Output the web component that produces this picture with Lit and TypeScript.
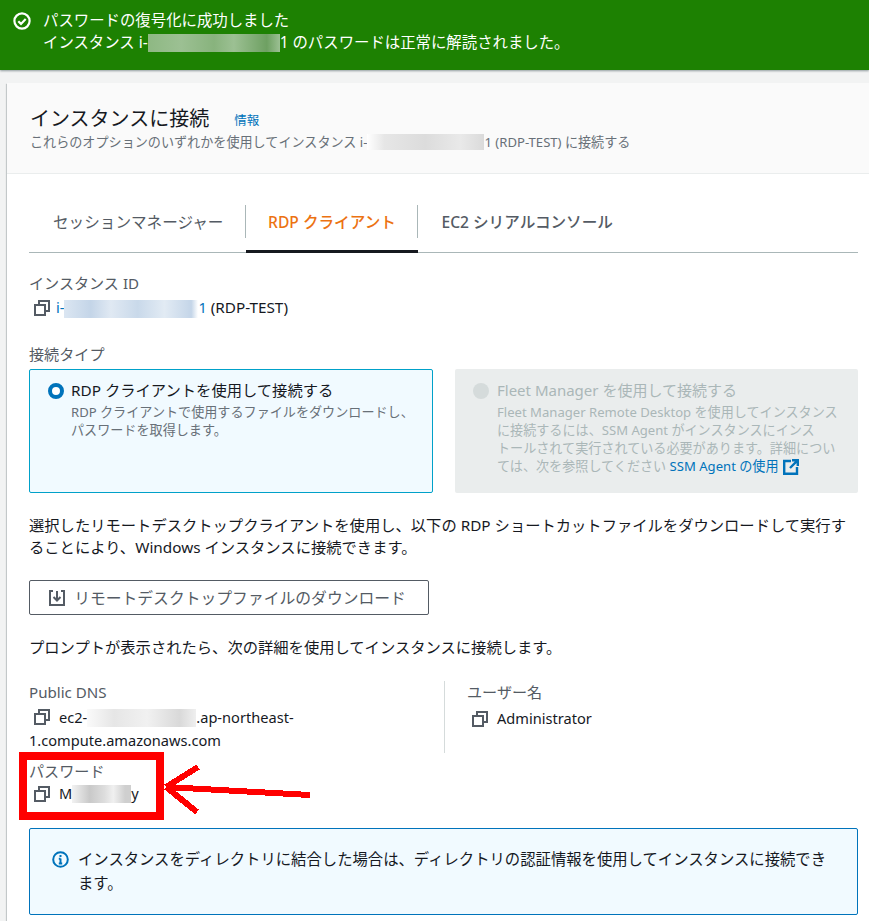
import { LitElement, html, css, svg } from "lit";
import { customElement } from "lit/decorators.js";

const copyIcon = svg`<svg class="copy" width="16" height="16" viewBox="0 0 16 16" fill="none" stroke="#545b64" stroke-width="2"><rect x="1" y="5" width="10" height="10"/><path d="M5 4V1h10v10h-3"/></svg>`;

@customElement("app-root")
export class AppRoot extends LitElement {
  static styles = css`
    :host { display: block; width: 869px; height: 921px; overflow: hidden; position: relative; background: #f2f3f3; font-family: "Noto Sans", "Noto Sans CJK JP", sans-serif; font-size: 14px; color: #16191f; }
    .banner { height: 70px; background: #1d8102; color: #fff; box-shadow: 0 1px 2px rgba(0,28,36,.4); display: flex; gap: 12px; padding: 10px 0 0 13px; box-sizing: border-box; line-height: 22px; }
    .banner svg { margin-top: 2px; flex: none; }
    .banner p { margin: 0; white-space: nowrap; }
    .t1 { font-size: 15.4px; }
    .card { margin: 13px 0 0 7px; background: #fff; box-shadow: 0 1px 1px 0 rgba(0,28,36,.3), 1px 1px 1px 0 rgba(0,28,36,.15), -1px 1px 1px 0 rgba(0,28,36,.15); height: 900px; }
    .head { height: 91px; background: #fafafa; border-bottom: 1px solid #eaeded; box-sizing: border-box; padding: 22px 23px 0; }
    .title { display: flex; align-items: center; gap: 25px; height: 28px; }
    .title h1 { margin: 0; font-size: 20px; font-weight: 400; line-height: 28px; }
    .title a { font-size: 12.5px; color: #0073bb; }
    .sub { font-size: 13.1px; color: #687078; line-height: 20px; margin-top: -1px; white-space: nowrap; }
    .body { padding: 0 11px 0 22px; }
    .tabs { display: flex; height: 78px; border-bottom: 1px solid #aab7b8; align-items: flex-end; }
    .tab { height: 47px; box-sizing: border-box; display: flex; align-items: flex-start; font-size: 15.6px; font-weight: 400; color: #545b64; white-space: nowrap; position: relative; }
    .tab span { height: 33px; display: flex; align-items: center; padding: 0 22px; border-right: 1px solid #aab7b8; }
    .tab:last-child span { border-right: 0; padding-left: 23px; }
    .tab.first span { padding-left: 24px; }
    .tab.active { color: #ec7211; font-weight: 500; width: 172px; border-bottom: 3px solid #16191f; margin-bottom: -1px; height: 48px; }
    .tab.active span { width: 100%; box-sizing: border-box; justify-content: center; padding: 0; }
    .tab.last { font-weight: 500; }
    .label { color: #545b64; line-height: 22px; font-size: 15.1px; white-space: nowrap; }
    .value { display: flex; align-items: center; line-height: 23px; font-size: 14.6px; white-space: nowrap; margin-top: 2px; }
    .copy { margin: 0 9px 0 5px; flex: none; }
    .tight .copy { margin-right: 6px; }
    .tag { font-size: 15.3px; }
    .blur { display: inline-block; height: 16px; vertical-align: middle; }
    .b-blue { width: 134px; height: 18px; background: linear-gradient(90deg,#dbe6f2,#c4d5e8 20%,#e0e9f3 35%,#c9d9ea 55%,#e2ebf4 75%,#c4d5e8 95%,#fff); }
    .b-green { width: 132px; height: 18px; background: linear-gradient(90deg,#8eb883,#9cc093 25%,#88b37d 50%,#9cc093 65%,#6ea062 90%,#9cc093); vertical-align: -4px; }
    .b-grey { width: 117px; height: 16px; background: linear-gradient(90deg,#fff,#e6e6e6 15%,#dcdcdc 50%,#e9e9e9 80%,#dadada); vertical-align: -3px; }
    .b-dns { width: 109px; height: 18px; background: linear-gradient(90deg,#fafafa,#e6e6e6 25%,#f1f1f1 55%,#d9d9d9 85%,#efefef); vertical-align: -4px; }
    .b-pw { width: 59px; height: 18px; background: linear-gradient(90deg,#f2f2f2,#c9c9c9 30%,#dddddd 55%,#f0f0f0 70%,#cfcfcf 90%); vertical-align: -4px; }
    .link { color: #0073bb; }
    .f1 { margin-top: 19px; }
    .f2 { margin-top: 24px; }
    .radios { display: grid; grid-template-columns: 404px 403px; gap: 22px; margin-top: 4px; height: 124px; }
    .radio { border-radius: 2px; box-sizing: border-box; display: flex; gap: 7px; }
    .radio.on { background: #f1faff; border: 1px solid #00a1c9; padding: 10px 18px 0; }
    .radio.off { background: #eaeded; padding: 11px 19px 0 18px; color: #aab7b8; gap: 8px; }
    .dot { width: 16px; height: 16px; border-radius: 50%; flex: none; margin-top: 3px; box-sizing: border-box; }
    .on .dot { border: 4.5px solid #0073bb; background: #fff; }
    .off .dot { background: #d5dbdb; }
    .rt { font-size: 15.3px; line-height: 20px; white-space: nowrap; }
    .off .rt { font-size: 15px; }
    .rd { font-size: 13.1px; line-height: 18px; color: #687078; margin-top: 3px; white-space: nowrap; }
    .off .rd { color: #aab7b8; }
    .rd .link svg { vertical-align: -4px; margin-left: 4px; }
    .para { margin: 21px 0 0; line-height: 22px; font-size: 15.3px; white-space: nowrap; }
    .btn { display: flex; align-items: center; justify-content: center; gap: 9px; width: 400px; height: 35px; box-sizing: border-box; margin-top: 22px; padding-right: 3px; border: 1px solid #545b64; border-radius: 2px; background: #fff; color: #545b64; font-size: 15.8px; font-weight: 400; white-space: nowrap; }
    .p2 { margin-top: 21px; }
    .cols { display: grid; grid-template-columns: 415px 1fr; margin-top: 23px; height: 72px; }
    .col2 { border-left: 1px solid #d5dbdb; padding-left: 22px; height: 72px; }
    .col2 .value { margin-top: 4px; }
    .wrap { line-height: 23px; font-size: 14.6px; margin-top: 3px; white-space: nowrap; }
    .wrap .copy { vertical-align: -2px; }
    .pw { margin-top: 7px; }
    .pw .value { margin-top: 0; }
    .info { margin-top: 23px; height: 87px; border: 1px solid #0073bb; border-radius: 2px; background: #f1faff; box-sizing: border-box; padding: 18px 22px 0; display: flex; gap: 9px; font-size: 15.35px; line-height: 24px; }
    .info svg { flex: none; margin-top: 4px; }
    .annot { position: absolute; left: 0; top: 0; pointer-events: none; }
  `;

  render() {
    return html`
      <div class="banner">
        <svg width="18" height="18" viewBox="0 0 18 18" fill="none" stroke="#fff" stroke-width="2.2"><circle cx="9" cy="9" r="7.6"/><path d="M5.3 9.2l2.7 2.7 4.7-4.8"/></svg>
        <div>
          <p class="t1">パスワードの復号化に成功しました</p>
          <p class="t1">インスタンス i-<span class="blur b-green"></span>1 のパスワードは正常に解読されました。</p>
        </div>
      </div>
      <div class="card">
        <div class="head">
          <div class="title"><h1>インスタンスに接続</h1><a class="link">情報</a></div>
          <div class="sub">これらのオプションのいずれかを使用してインスタンス i-<span class="blur b-grey"></span>1 (RDP-TEST) に接続する</div>
        </div>
        <div class="body">
          <div class="tabs">
            <div class="tab first"><span>セッションマネージャー</span></div>
            <div class="tab active"><span>RDP クライアント</span></div>
            <div class="tab last"><span>EC2 シリアルコンソール</span></div>
          </div>
          <div class="label f1">インスタンス ID</div>
          <div class="value tight">${copyIcon}<span><span class="link">i-<span class="blur b-blue"></span>1</span> <span class="tag">(RDP-TEST)</span></span></div>
          <div class="label f2">接続タイプ</div>
          <div class="radios">
            <div class="radio on">
              <div class="dot"></div>
              <div>
                <div class="rt">RDP クライアントを使用して接続する</div>
                <div class="rd">RDP クライアントで使用するファイルをダウンロードし、<br>パスワードを取得します。</div>
              </div>
            </div>
            <div class="radio off">
              <div class="dot"></div>
              <div>
                <div class="rt">Fleet Manager を使用して接続する</div>
                <div class="rd">Fleet Manager Remote Desktop を使用してインスタンス<br>に接続するには、SSM Agent がインスタンスにインス<br>トールされて実行されている必要があります。詳細につい<br>ては、次を参照してください <span class="link">SSM Agent の使用<svg width="16" height="16" viewBox="0 0 16 16" fill="none" stroke="#0073bb" stroke-width="2.4"><path d="M8 2H1.2v12.8H14V8"/><path d="M9 1.2h5.8V7M14.8 1.2L7 9"/></svg></span></div>
              </div>
            </div>
          </div>
          <p class="para">選択したリモートデスクトップクライアントを使用し、以下の RDP ショートカットファイルをダウンロードして実行す<br>ることにより、Windows インスタンスに接続できます。</p>
          <div class="btn">
            <svg width="16" height="16" viewBox="0 0 16 16" fill="none" stroke="#545b64" stroke-width="2"><path d="M4 1H1v14h14V1h-3"/><path d="M8 1v9M4.5 7L8 10.5 11.5 7"/></svg>
            <span>リモートデスクトップファイルのダウンロード</span>
          </div>
          <p class="para p2">プロンプトが表示されたら、次の詳細を使用してインスタンスに接続します。</p>
          <div class="cols">
            <div>
              <div class="label">Public DNS</div>
              <div class="wrap">${copyIcon}ec2-<span class="blur b-dns"></span>.ap-northeast-<br>1.compute.amazonaws.com</div>
            </div>
            <div class="col2">
              <div class="label">ユーザー名</div>
              <div class="value">${copyIcon}Administrator</div>
            </div>
          </div>
          <div class="pw">
            <div class="label">パスワード</div>
            <div class="value">${copyIcon}M<span class="blur b-pw"></span>y</div>
          </div>
          <div class="info">
            <svg width="17" height="17" viewBox="0 0 17 17" fill="none"><circle cx="8.5" cy="8.5" r="7.3" stroke="#0073bb" stroke-width="2"/><path d="M8.5 7.5v5M6.8 12.5h3.4M6.8 7.8h1.7" stroke="#0073bb" stroke-width="2"/><rect x="7.5" y="4" width="2" height="2" fill="#0073bb"/></svg>
            <div>インスタンスをディレクトリに結合した場合は、ディレクトリの認証情報を使用してインスタンスに接続でき<br>ます。</div>
          </div>
        </div>
      </div>
      <svg class="annot" width="869" height="921" viewBox="0 0 869 921" fill="none" shape-rendering="crispEdges">
        <rect x="23" y="756" width="136.5" height="60" stroke="#ff0000" stroke-width="8"/>
        <path d="M166 787L310 795M166 787L198 767M166 787L197 812" stroke="#ff0000" stroke-width="6"/>
      </svg>
    `;
  }
}
